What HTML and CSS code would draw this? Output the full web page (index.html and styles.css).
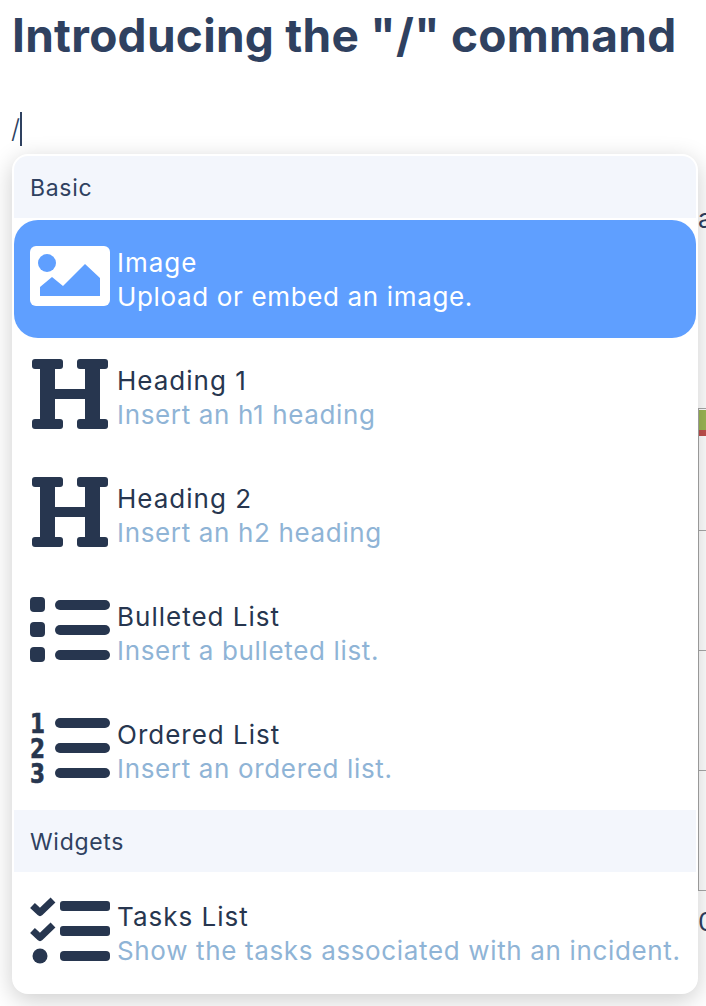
FILE: index.html
```html
<!DOCTYPE html>
<html lang="en">
<head>
<meta charset="utf-8">
<title>Introducing the "/" command</title>
<link rel="stylesheet" href="styles.css">
</head>
<body>
<main class="page">
  <h1 class="title">Introducing the "/" command</h1>
  <p class="line">/<span class="caret"></span></p>
  <div class="behind">
    <div class="behind-word">a</div>
    <div class="behind-table">
      <div class="behind-row behind-row-chart"><div class="chart"><span class="chart-green"></span><span class="chart-red"></span></div></div>
      <div class="behind-row"></div>
      <div class="behind-row"></div>
      <div class="behind-row"></div>
    </div>
    <div class="behind-word behind-word-last">0</div>
  </div>

  <nav class="menu">
    <div class="section">Basic</div>
    <div class="items items-first">
      <div class="item item-active">
        <svg class="icon" width="80" height="60" viewBox="0 0 80 60"><rect width="80" height="60" rx="6" fill="#fff"/><circle cx="17" cy="17" r="9" fill="#5f9fff"/><path d="M10 50V41L22 31L33 40L55 18L70 32V50Z" fill="#5f9fff"/></svg>
        <div class="text"><div class="name">Image</div><div class="desc">Upload or embed an image.</div></div>
      </div>
      <div class="item">
        <svg class="icon" width="80" height="70" viewBox="0 0 80 70"><g fill="#27364f"><rect x="2" width="31" height="10" rx="3"/><rect x="47" width="31" height="10" rx="3"/><rect x="2" y="60" width="31" height="10" rx="3"/><rect x="47" y="60" width="31" height="10" rx="3"/><rect x="10" y="4" width="15" height="62"/><rect x="55" y="4" width="15" height="62"/><rect x="20" y="30" width="40" height="10"/></g></svg>
        <div class="text"><div class="name">Heading 1</div><div class="desc">Insert an h1 heading</div></div>
      </div>
      <div class="item">
        <svg class="icon" width="80" height="70" viewBox="0 0 80 70"><g fill="#27364f"><rect x="2" width="31" height="10" rx="3"/><rect x="47" width="31" height="10" rx="3"/><rect x="2" y="60" width="31" height="10" rx="3"/><rect x="47" y="60" width="31" height="10" rx="3"/><rect x="10" y="4" width="15" height="62"/><rect x="55" y="4" width="15" height="62"/><rect x="20" y="30" width="40" height="10"/></g></svg>
        <div class="text"><div class="name">Heading 2</div><div class="desc">Insert an h2 heading</div></div>
      </div>
      <div class="item">
        <svg class="icon" width="80" height="66" viewBox="0 0 80 66"><g fill="#27364f"><rect width="15" height="15" rx="4"/><rect y="25" width="15" height="15" rx="4"/><rect y="50" width="15" height="15" rx="4"/><rect x="25" y="3" width="55" height="10" rx="5"/><rect x="25" y="28" width="55" height="10" rx="5"/><rect x="25" y="53" width="55" height="10" rx="5"/></g></svg>
        <div class="text"><div class="name">Bulleted List</div><div class="desc">Insert a bulleted list.</div></div>
      </div>
      <div class="item">
        <svg class="icon" width="80" height="70" viewBox="0 0 80 70"><g fill="#27364f"><text class="num" x="0" y="20" textLength="15" lengthAdjust="spacingAndGlyphs">1</text><text class="num" x="0" y="45" textLength="15" lengthAdjust="spacingAndGlyphs">2</text><text class="num" x="0" y="70" textLength="15" lengthAdjust="spacingAndGlyphs">3</text><rect x="25" y="5" width="55" height="10" rx="5"/><rect x="25" y="30" width="55" height="10" rx="5"/><rect x="25" y="55" width="55" height="10" rx="5"/></g></svg>
        <div class="text"><div class="name">Ordered List</div><div class="desc">Insert an ordered list.</div></div>
      </div>
    </div>
    <div class="section">Widgets</div>
    <div class="items">
      <div class="item item-tasks">
        <svg class="icon" width="80" height="68" viewBox="0 0 80 68"><g fill="#27364f"><path d="M2.5 9.5L10 16.5L23 4" fill="none" stroke="#27364f" stroke-width="7" stroke-linejoin="round"/><path d="M2.5 34.5L10 41.5L23 29" fill="none" stroke="#27364f" stroke-width="7" stroke-linejoin="round"/><circle cx="10" cy="60" r="7.5"/><rect x="30" y="5" width="50" height="10" rx="3"/><rect x="30" y="30" width="50" height="10" rx="3"/><rect x="30" y="55" width="50" height="10" rx="4"/></g></svg>
        <div class="text"><div class="name">Tasks List</div><div class="desc">Show the tasks associated with an incident.</div></div>
      </div>
    </div>
  </nav>
</main>
</body>
</html>
```
FILE: styles.css
```css
* { box-sizing: border-box; }
html, body { margin: 0; height: 100%; overflow: hidden; background: #fff; }
body { font-family: Inter, "Liberation Sans", sans-serif; color: #2f4160; }
.page { position: relative; height: 1006px; padding: 0 0 0 12px; overflow: hidden; }
.title { margin: 0; padding-top: 7px; height: 64px; font-size: 46px; line-height: 56px; font-weight: 700; letter-spacing: 0.28px; white-space: nowrap; }
.line { display: flex; align-items: center; margin: 0 0 0 -1px; padding-top: 46px; height: 84px; font-size: 26px; line-height: 34px; font-weight: 300; }
.caret { display: inline-block; width: 2px; height: 34px; background: #2f4160; }
.behind { margin-left: 686px; padding-top: 54px; }
.behind-word { font-size: 26px; line-height: 34px; height: 34px; color: #2f4160; }
.behind-table { margin-top: 172px; border-left: 1px solid #a8a8a8; }
.behind-row { height: 120px; border-bottom: 1px solid #a8a8a8; }
.behind-row-chart { border-top: 1px solid #a8a8a8; height: 123px; }
.chart { display: flex; flex-direction: column; height: 27px; padding-top: 1px; }
.chart-green { display: block; height: 20px; background: #9cb654; }
.chart-red { display: block; height: 6px; background: #c0504d; }
.behind-word-last { margin-top: 14px; }

.menu { position: absolute; left: 12px; top: 154px; width: 686px; height: 840px; padding: 2px; background: #fff; border-radius: 16px; box-shadow: 0 6px 24px rgba(0, 0, 0, 0.2); }
.section { display: flex; align-items: center; height: 62px; padding: 2px 0 0 16px; background: #f3f6fc; font-size: 23px; line-height: 30px; letter-spacing: 0.7px; font-weight: 400; color: #2f4160; }
.section:first-child { border-radius: 14px 14px 0 0; }
.items-first { padding-top: 2px; }
.item { display: flex; align-items: center; gap: 7px; height: 118px; padding: 2px 0 0 16px; }
.item-active { background: #5f9fff; border-radius: 24px; color: #fff; }
.item-tasks { padding-top: 6px; }
.icon { flex: none; display: block; margin-bottom: 8px; overflow: visible; }
.text { white-space: nowrap; }
.name { font-size: 26px; line-height: 34px; letter-spacing: 1px; font-weight: 400; color: #27364f; }
.desc { font-size: 26px; line-height: 34px; letter-spacing: 0.65px; color: #8fb4d6; }
.item-active .name, .item-active .desc { color: #fff; }
.num { font-family: "DejaVu Sans", sans-serif; font-weight: 700; font-size: 27px; stroke: #27364f; stroke-width: 0.6px; }
```
